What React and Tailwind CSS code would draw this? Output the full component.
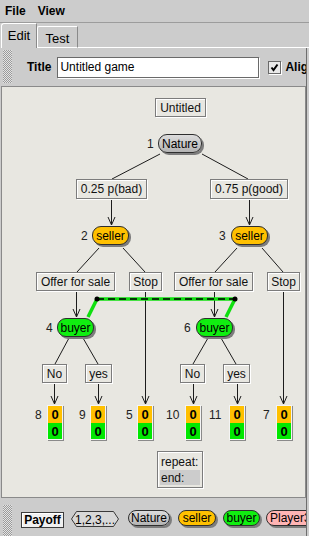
import React from "react";

function Arrow({ x, y1, y2 }) {
  return (
    <g>
      <line x1={x} y1={y1} x2={x} y2={y2} />
      <path d={`M${x - 3.5} ${y2 - 8} L${x} ${y2} L${x + 3.5} ${y2 - 8}`} />
    </g>
  );
}

function Payoff({ cls }) {
  return (
    <div className={cls}>
      <div className="h-[17px] bg-[#ffc000] flex items-center justify-center font-bold text-[13px]">0</div>
      <div className="flex-1 bg-[#00e800] flex items-center justify-center font-bold text-[13px]">0</div>
    </div>
  );
}

export default function App() {
  const lbl =
    "absolute h-[19px] border border-[#7c7c7c] shadow-[inset_1px_1px_0_#ffffff,1px_1px_0_#ffffff] flex items-center justify-center text-[#111]";
  const pill =
    "absolute h-[19px] rounded-[9px] border border-[#2e2e2e] shadow-[2px_2px_0_#7d7d7d] flex items-center justify-center text-black";
  const num = "absolute h-[19px] flex items-center text-[#222]";
  const pay =
    "absolute top-[318px] w-[16px] h-[35px] border border-[#f4f4f4] shadow-[1px_1px_0_#8a8a8a] flex flex-col";
  const pnum = "absolute top-[320px] h-[16px] flex items-center text-[#222]";
  const bpill =
    "mt-[12px] h-[16px] shrink-0 rounded-[8px] border border-[#2e2e2e] shadow-[2px_2px_0_#7d7d7d] flex items-center";

  return (
    <div className="w-[309px] h-[536px] overflow-hidden bg-[#cccccc] text-[12px] leading-none text-black font-['Liberation_Sans',Arial,sans-serif]">
      {/* Menu bar */}
      <div className="h-[23px] border-b border-[#9c9c9c] flex items-center pl-[5px] gap-[12px] font-bold">
        <span>File</span>
        <span>View</span>
      </div>

      {/* Tabs */}
      <div className="h-[25px] flex items-end">
        <div className="ml-[1px] w-[36px] h-[25px] border-l border-t border-white border-r border-r-[#8a8a8a] rounded-tl-[3px] flex items-center justify-center pb-[1px] text-[13px]">
          Edit
        </div>
        <div className="w-[41px] h-[22px] border-l border-t border-white border-r border-r-[#8a8a8a] border-b border-b-white rounded-tl-[2px] flex items-center justify-center pt-[3px] text-[13px]">
          Test
        </div>
        <div className="flex-1 h-[1px] bg-white"></div>
      </div>

      {/* Panel */}
      <div className="w-[307px] h-[488px] border-r border-[#6e6e6e] overflow-hidden flex flex-col">
        {/* top toolbar */}
        <div className="h-[38px] shrink-0 flex items-center whitespace-nowrap">
          <div className="self-start mt-[2px] ml-[3px] w-[9px] h-[33px] shrink-0 bg-[repeating-conic-gradient(#9a9a9a_0_25%,#e4e4e4_0_50%)] bg-[length:2px_2px]"></div>
          <span className="ml-[15px] font-bold shrink-0">Title</span>
          <div className="ml-[6px] w-[202px] h-[21px] shrink-0 bg-white border border-[#6a6a6a] shadow-[1px_1px_0_#ffffff] flex items-center pl-[2px]">
            Untitled game
          </div>
          <div className="ml-[9px] w-[13px] h-[13px] shrink-0 border border-[#6a6a6a] shadow-[1px_1px_0_#ffffff] bg-[#e9e9e9] flex items-center justify-center">
            <svg width="9" height="9" viewBox="0 0 9 9">
              <path d="M1.5 4.5 L3.5 7 L7.5 1.5" stroke="#000" strokeWidth="2" fill="none" />
            </svg>
          </div>
          <span className="ml-[4px] font-bold shrink-0">Align</span>
        </div>

        {/* canvas */}
        <div className="ml-[1px] w-[305px] h-[412px] shrink-0 border border-[#8a8a8a] bg-[#e8e7e1] relative overflow-hidden">
          <svg className="absolute left-0 top-0" width="303" height="410" viewBox="2 87 303 410">
            <g stroke="#1c1c1c" strokeWidth="1" fill="none">
              <line x1="160" y1="154" x2="112" y2="179" />
              <line x1="202" y1="154" x2="248" y2="179" />
              <Arrow x={111.5} y1={199} y2={225} />
              <Arrow x={249.5} y1={199} y2={225} />
              <line x1="99" y1="248" x2="77" y2="272" />
              <line x1="123" y1="248" x2="145" y2="272" />
              <line x1="237" y1="248" x2="215" y2="272" />
              <line x1="262" y1="248" x2="283" y2="272" />
              <Arrow x={76.5} y1={291} y2={317} />
              <Arrow x={214.5} y1={291} y2={317} />
              <Arrow x={145.5} y1={291} y2={404} />
              <Arrow x={283.5} y1={291} y2={404} />
              <line x1="69" y1="338" x2="55" y2="364" />
              <line x1="83" y1="338" x2="98" y2="364" />
              <line x1="208" y1="338" x2="193" y2="364" />
              <line x1="221" y1="338" x2="236" y2="364" />
              <Arrow x={54.5} y1={383} y2={404} />
              <Arrow x={98.5} y1={383} y2={404} />
              <Arrow x={193.5} y1={383} y2={404} />
              <Arrow x={237.5} y1={383} y2={404} />
            </g>
            <path d="M88 317 L97 299 L235 299 L226 317" stroke="#10e010" strokeWidth="3.5" fill="none" strokeLinejoin="round" />
            <line x1="97" y1="299" x2="235" y2="299" stroke="#000" strokeWidth="1.5" strokeDasharray="7 4" />
            <circle cx="97" cy="299" r="2.5" fill="#000" />
            <circle cx="235" cy="299" r="2.5" fill="#000" />
          </svg>

          <div className={lbl + " left-[153px] top-[11px] w-[51px]"}>Untitled</div>

          <div className={num + " left-[145px] top-[47px]"}>1</div>
          <div className={pill + " left-[156px] top-[47px] w-[44px] bg-[linear-gradient(#dcdcdc,#b4b4b4)]"}>Nature</div>

          <div className={lbl + " left-[74px] top-[92px] w-[71px] h-[20px]"}>0.25 p(bad)</div>
          <div className={lbl + " left-[208px] top-[92px] w-[78px] h-[20px]"}>0.75 p(good)</div>

          <div className={num + " left-[79px] top-[139px]"}>2</div>
          <div className={pill + " left-[90px] top-[139px] w-[37px] bg-[#ffc000]"}>seller</div>
          <div className={num + " left-[217px] top-[139px]"}>3</div>
          <div className={pill + " left-[229px] top-[139px] w-[37px] bg-[#ffc000]"}>seller</div>

          <div className={lbl + " left-[34px] top-[185px] w-[79px]"}>Offer for sale</div>
          <div className={lbl + " left-[127px] top-[185px] w-[33px]"}>Stop</div>
          <div className={lbl + " left-[172px] top-[185px] w-[79px]"}>Offer for sale</div>
          <div className={lbl + " left-[265px] top-[185px] w-[33px]"}>Stop</div>

          <div className={num + " left-[44px] top-[231px]"}>4</div>
          <div className={pill + " left-[55px] top-[231px] w-[37px] bg-[#10ee10]"}>buyer</div>
          <div className={num + " left-[182px] top-[231px]"}>6</div>
          <div className={pill + " left-[194px] top-[231px] w-[37px] bg-[#10ee10]"}>buyer</div>

          <div className={lbl + " left-[40px] top-[277px] w-[25px]"}>No</div>
          <div className={lbl + " left-[83px] top-[277px] w-[27px]"}>yes</div>
          <div className={lbl + " left-[178px] top-[277px] w-[25px]"}>No</div>
          <div className={lbl + " left-[221px] top-[277px] w-[27px]"}>yes</div>

          <div className={pnum + " left-[33px]"}>8</div>
          <Payoff cls={pay + " left-[45px]"} />
          <div className={pnum + " left-[77px]"}>9</div>
          <Payoff cls={pay + " left-[88px]"} />
          <div className={pnum + " left-[124px]"}>5</div>
          <Payoff cls={pay + " left-[135px]"} />
          <div className={pnum + " left-[164px]"}>10</div>
          <Payoff cls={pay + " left-[183px]"} />
          <div className={pnum + " left-[207px]"}>11</div>
          <Payoff cls={pay + " left-[227px]"} />
          <div className={pnum + " left-[261px]"}>7</div>
          <Payoff cls={pay + " left-[274px]"} />

          <div className="absolute left-[155px] top-[364px] w-[46px] h-[37px] border border-[#7c7c7c] shadow-[inset_1px_1px_0_#ffffff,1px_1px_0_#ffffff] p-[2px] flex flex-col text-[#111]">
            <div className="h-[16px] flex items-center pl-[1px]">repeat:</div>
            <div className="h-[15px] flex items-center pl-[1px] bg-[#cccccc]">end:</div>
          </div>
        </div>

        {/* bottom toolbar */}
        <div className="h-[38px] shrink-0 flex items-start whitespace-nowrap">
          <div className="mt-[7px] ml-[3px] w-[9px] h-[33px] shrink-0 bg-[repeating-conic-gradient(#9a9a9a_0_25%,#e4e4e4_0_50%)] bg-[length:2px_2px]"></div>
          <div className="ml-[9px] mt-[14px] w-[43px] h-[16px] shrink-0 border border-[#3c3c3c] shadow-[inset_1px_1px_0_#ffffff] bg-[#f0f0f0] flex items-center justify-center font-bold">
            Payoff
          </div>
          <div className="ml-[6px] mt-[13px] w-[50px] h-[17px] shrink-0 relative flex items-center justify-center">
            <svg className="absolute left-0 top-0" width="50" height="17" viewBox="0 0 50 17">
              <path d="M6.5 0.5 L43.5 0.5 L48.5 8 L43.5 15.5 L6.5 15.5 L1.5 8 Z" fill="#d8d8d8" stroke="#3a3a3a" />
            </svg>
            <span className="relative">1,2,3,...</span>
          </div>
          <div className={bpill + " ml-[8px] w-[42px] justify-center bg-[linear-gradient(#dcdcdc,#b4b4b4)]"}>Nature</div>
          <div className={bpill + " ml-[8px] w-[38px] justify-center bg-[#ffc000]"}>seller</div>
          <div className={bpill + " ml-[7px] w-[37px] justify-center bg-[#10ee10]"}>buyer</div>
          <div className={bpill + " ml-[6px] w-[48px] pl-[3px] bg-[#ffb4b4]"}>Player3</div>
        </div>
      </div>
    </div>
  );
}
